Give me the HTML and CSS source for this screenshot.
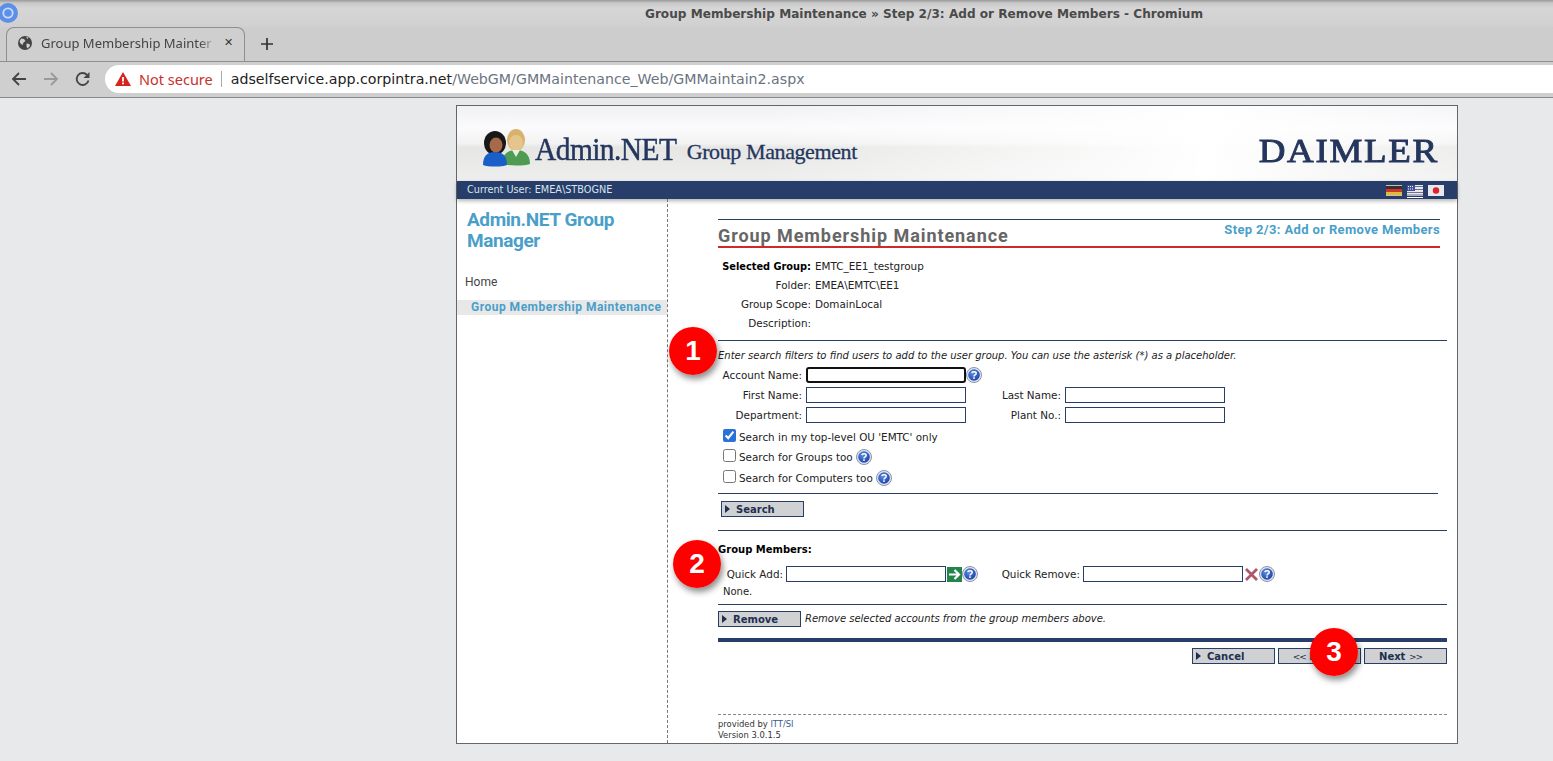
FILE: index.html
```html
<!DOCTYPE html>
<html lang="en">
<head>
    <meta charset="UTF-8">
    <title>Group Membership Maintenance</title>
    <link rel="stylesheet" href="styles.css">
</head>
<body>
<div class="browser">
    <div class="titlebar">
        <svg class="app-icon" width="20" height="20" viewBox="0 0 20 20">
            <circle cx="8" cy="10" r="10" fill="#5d8fe8"/>
            <circle cx="8" cy="10" r="5.6" fill="#cddbf6"/>
            <circle cx="8" cy="10" r="3.8" fill="#5a90ee"/>
        </svg>
        <span class="window-title">Group Membership Maintenance » Step 2/3: Add or Remove Members - Chromium</span>
    </div>
    <div class="tabstrip">
        <div class="tab">
            <svg class="globe" width="14" height="14" viewBox="0 0 14 14">
                <circle cx="7" cy="7" r="7" fill="#444"/>
                <path d="M3 2.500l3 .5 1.500 2-2 1.500-1 2.500-2-1.500-1-2zM8.500 7.500l3 .5 .5 2-2.500 2.500-1-2zM8 1l2.500 .5-1 1.500z" fill="#cfcfcf"/>
            </svg>
            <span class="tab-title">Group Membership Mainter</span>
            <span class="tab-close">✕</span>
        </div>
        <svg class="new-tab" width="12" height="12" viewBox="0 0 12 12">
            <path d="M6 0v12M0 6h12" stroke="#333" stroke-width="1.700"/>
        </svg>
    </div>
    <div class="toolbar">
        <svg class="nav" width="16" height="16" viewBox="0 0 16 16">
            <path d="M15 8H2M8 2L2 8l6 6" fill="none" stroke="#444" stroke-width="1.800"/>
        </svg>
        <svg class="nav" width="16" height="16" viewBox="0 0 16 16">
            <path d="M1 8h13M8 2l6 6-6 6" fill="none" stroke="#9a9a9a" stroke-width="1.800"/>
        </svg>
        <svg class="nav" width="16" height="16" viewBox="0 0 16 16">
            <path d="M13.500 9.500A6 6 0 1 1 12 3.800" fill="none" stroke="#444" stroke-width="1.800"/>
            <path d="M14.500 1v6h-6z" fill="#444"/>
        </svg>
        <div class="omnibox">
            <svg width="16" height="14" viewBox="0 0 16 14">
                <path d="M8 0l8 14H0z" fill="#d3261c"/>
                <path d="M7.100 5h1.800v4.500H7.100zM7.100 10.500h1.800v1.800H7.100z" fill="#fff"/>
            </svg>
            <span class="not-secure">Not secure</span>
            <span class="url"><b>adselfservice.app.corpintra.net</b>/WebGM/GMMaintenance_Web/GMMaintain2.aspx</span>
        </div>
    </div>

    <div class="viewport">
        <div class="frame">
            <div class="banner">
                <svg class="people" width="56" height="40" viewBox="0 0 56 40">
                    <ellipse cx="35" cy="12" rx="9" ry="11" fill="#d9b26a"/>
                    <ellipse cx="35" cy="15" rx="7" ry="8" fill="#e6c48e"/>
                    <path d="M21 36c0-10 6-14 14-14s14 4 14 14c-6 2-22 2-28 0z" fill="#4e9c52"/>
                    <path d="M31 22l4 7 4-7z" fill="#e8f0e0"/>
                    <ellipse cx="14" cy="15" rx="11" ry="12" fill="#181818"/>
                    <ellipse cx="15" cy="17" rx="6.500" ry="7.500" fill="#a8684a"/>
                    <path d="M2 37c0-9 4-13 12-13s12 4 12 13c-5 2-19 2-24 0z" fill="#1a5fc8"/>
                </svg>
                <span class="brand">Admin.NET</span>
                <span class="brand-sub">Group Management</span>
                <span class="daimler">DAIMLER</span>
            </div>
            <div class="userbar">
                <span class="current-user">Current User: EMEA\STBOGNE</span>
                <div class="flags">
                    <svg width="16" height="11" viewBox="0 0 16 11">
                        <rect width="16" height="11" fill="#c8c2a8"/>
                        <rect y="1" width="16" height="3" fill="#333"/>
                        <rect y="4" width="16" height="3" fill="#d0342a"/>
                        <rect y="7" width="16" height="3" fill="#e3b93c"/>
                    </svg>
                    <svg class="flag-us" width="16" height="13" viewBox="0 0 16 13">
                        <rect width="16" height="11" fill="#e9e9ef"/>
                        <path d="M0 1.500h16M0 4.500h16M0 7.500h16M0 10h16" stroke="#6f6f90"/>
                        <rect width="8" height="6" fill="#3f4f98"/>
                        <path d="M1 1.500h6M1 4h6" stroke="#fff" stroke-dasharray="1 1"/>
                        <rect y="12" width="16" height="1" fill="#fff"/>
                    </svg>
                    <svg width="16" height="11" viewBox="0 0 16 11">
                        <rect width="16" height="11" fill="#e8e8ec"/>
                        <circle cx="8" cy="5.500" r="3.200" fill="#e0202a"/>
                    </svg>
                </div>
            </div>
            <div class="columns">
                <div class="sidebar">
                    <div class="side-title">Admin.NET Group Manager</div>
                    <div class="side-home">Home</div>
                    <div class="side-current">Group Membership Maintenance</div>
                </div>
                <div class="content">
                    <div class="page-head">
                        <h1>Group Membership Maintenance</h1>
                        <span class="step">Step 2/3: Add or Remove Members</span>
                    </div>

                    <div class="info">
                        <label class="strong">Selected Group:</label><span>EMTC_EE1_testgroup</span>
                        <label>Folder:</label><span>EMEA\EMTC\EE1</span>
                        <label>Group Scope:</label><span>DomainLocal</span>
                        <label>Description:</label><span></span>
                    </div>

                    <div class="section search-section">
                        <p class="hint">Enter search filters to find users to add to the user group. You can use the asterisk (*) as a placeholder.</p>
                        <div class="filters">
                            <label>Account Name:</label>
                            <div class="field"><input class="text focused" type="text"><svg class="help" viewBox="0 0 16 16"><use href="#q"/></svg></div>
                            <span></span><span></span>
                            <label>First Name:</label>
                            <div class="field"><input class="text" type="text"></div>
                            <label>Last Name:</label>
                            <div class="field"><input class="text" type="text"></div>
                            <label>Department:</label>
                            <div class="field"><input class="text" type="text"></div>
                            <label>Plant No.:</label>
                            <div class="field"><input class="text" type="text"></div>
                        </div>
                        <div class="checks">
                            <div class="check"><input type="checkbox" checked><span>Search in my top-level OU 'EMTC' only</span></div>
                            <div class="check"><input type="checkbox"><span>Search for Groups too</span><svg class="help" viewBox="0 0 16 16"><use href="#q"/></svg></div>
                            <div class="check"><input type="checkbox"><span>Search for Computers too</span><svg class="help" viewBox="0 0 16 16"><use href="#q"/></svg></div>
                        </div>
                        <div class="search-bar">
                            <button class="btn arrow">Search</button>
                        </div>
                    </div>

                    <div class="section members">
                        <div class="members-title">Group Members:</div>
                        <div class="quick">
                            <label class="quick-add">Quick Add:</label>
                            <input class="text" type="text">
                            <svg class="go" width="15" height="15" viewBox="0 0 15 15">
                                <rect width="15" height="15" fill="#23854a"/>
                                <path d="M2 7.500h9M7.500 3l4.500 4.500L7.500 12" fill="none" stroke="#fff" stroke-width="2.200"/>
                            </svg>
                            <svg class="help" viewBox="0 0 16 16"><use href="#q"/></svg>
                            <label class="quick-remove">Quick Remove:</label>
                            <input class="text" type="text">
                            <svg class="go" width="15" height="15" viewBox="0 0 15 15">
                                <path d="M2 2l11 11M13 2L2 13" stroke="#b0566a" stroke-width="2.800"/>
                            </svg>
                            <svg class="help" viewBox="0 0 16 16"><use href="#q"/></svg>
                        </div>
                        <div class="none">None.</div>
                    </div>

                    <div class="section remove-row">
                        <button class="btn arrow">Remove</button>
                        <em>Remove selected accounts from the group members above.</em>
                    </div>

                    <div class="actions">
                        <button class="btn arrow">Cancel</button>
                        <button class="btn step-btn"><span class="thin">&lt;&lt;</span> Back</button>
                        <button class="btn step-btn">Next <span class="thin">&gt;&gt;</span></button>
                    </div>

                    <div class="footer">
                        <div>provided by <span class="itt">ITT/SI</span></div>
                        <div>Version 3.0.1.5</div>
                    </div>
                </div>
            </div>
            <div class="badge badge-1">1</div>
            <div class="badge badge-2">2</div>
            <div class="badge badge-3">3</div>
        </div>
    </div>
</div>
<svg width="0" height="0" class="defs">
    <defs>
        <radialGradient id="qfill" cx="40%" cy="35%" r="70%">
            <stop offset="0" stop-color="#5b8ee0"/>
            <stop offset="1" stop-color="#1a3fa8"/>
        </radialGradient>
        <g id="q">
            <circle cx="8" cy="8" r="7.500" fill="#dfe6f2" stroke="#8a93a8" stroke-width="1"/>
            <circle cx="8" cy="8" r="5.800" fill="url(#qfill)"/>
            <path d="M5.800 6.200C6 4.300 10.200 4.300 10.200 6.400 10.200 7.900 8 7.900 8 9.400" fill="none" stroke="#fff" stroke-width="1.500"/>
            <rect x="7.200" y="10.300" width="1.600" height="1.600" fill="#fff"/>
        </g>
    </defs>
</svg>
</body>
</html>
```

FILE: styles.css
```css
*{
    margin: 0;
    padding: 0;
    box-sizing: border-box;
}
html,body{
    height: 761px;
    overflow: hidden;
}
body{
    background: #e8e9eb;
    font-family: "DejaVu Sans", sans-serif;
}
.defs{
    display: block;
    height: 0;
}

/* browser chrome */
.titlebar{
    height: 27px;
    background: linear-gradient(#9a9a9a 0, #c8c8c8 3px, #d6d6d6 8px, #d0d0d0 100%);
    position: relative;
    text-align: center;
}
.app-icon{
    position: absolute;
    left: 0;
    top: 3px;
}
.window-title{
    display: block;
    padding-left: 295px;
    line-height: 29px;
    font-size: 12.100px;
    font-weight: bold;
    color: #4a4a4a;
}
.tabstrip{
    height: 34px;
    background: #cdcdcd;
    display: flex;
    align-items: flex-end;
    padding-left: 6px;
}
.tab{
    width: 239px;
    height: 34px;
    background: #cfcfcf;
    border: 1px solid #8f8f8f;
    border-bottom: 0;
    border-radius: 8px 8px 0 0;
    display: flex;
    align-items: center;
    padding: 0 0 4px 11px;
}
.globe{
    flex: none;
}
.tab-title{
    width: 176px;
    margin-left: 9px;
    font: 13px "Noto Sans", sans-serif;
    color: #444;
    white-space: nowrap;
    overflow: hidden;
    -webkit-mask-image: linear-gradient(90deg, #000 90%, transparent);
}
.tab-close{
    margin-left: 7px;
    font-size: 11px;
    color: #333;
}
.new-tab{
    margin: 0 0 11px 16px;
}
.toolbar{
    height: 37px;
    background: #cfcfcf;
    border-top: 1px solid #8f8f8f;
    border-bottom: 1px solid #8a8a8a;
    display: flex;
    align-items: center;
    padding: 0 0 1px 11px;
}
.nav{
    margin-right: 16px;
}
.omnibox{
    flex: 1;
    height: 28px;
    margin-left: -2px;
    background: #fff;
    border-radius: 14px 0 0 14px;
    display: flex;
    align-items: center;
    padding-left: 10px;
}
.not-secure{
    margin: -1px 0 0 8px;
    padding-right: 8px;
    border-right: 1px solid #aaa;
    font: 14.500px/16px "Noto Sans", sans-serif;
    color: #c9302a;
}
.url{
    margin-left: 9px;
    font-size: 14.200px;
    color: #6b7480;
}
.url b{
    font-weight: normal;
    color: #222;
}

/* page */
.viewport{
    padding: 7px 0 0 456px;
}
.frame{
    width: 1002px;
    height: 639px;
    background: #fff;
    border: 1px solid #666;
    position: relative;
    font-size: 10.400px;
    color: #222;
}
.banner{
    height: 75px;
    background-image: linear-gradient(90deg, rgba(240,240,240,0) 30%, #fff 75%, rgba(255,255,255,.3) 100%), linear-gradient(#f0f1f4, #fbfbfd 30%, #f2f2f2 50%, #e6e6e4 55%, #eeeeee 100%);
    display: flex;
    align-items: flex-start;
    padding: 24px 18px 0 24px;
    font-family: "Liberation Serif", serif;
    color: #24365e;
}
.people{
    flex: none;
    margin-top: -2px;
}
.brand{
    margin: 1px -2px 0 -2px;
    font-size: 32px;
    line-height: 36px;
    letter-spacing: -.6px;
    -webkit-text-stroke: .5px #24365e;
    transform: scaleX(.92);
    transform-origin: left center;
}
.brand-sub{
    margin-top: 9px;
    font-size: 22px;
    line-height: 26px;
    letter-spacing: -.4px;
    -webkit-text-stroke: .3px #24365e;
}
.daimler{
    margin: 3px 0 0 auto;
    font-size: 33px;
    line-height: 36px;
    letter-spacing: 1.500px;
    -webkit-text-stroke: .9px #24365e;
    transform: scaleX(1.120);
    transform-origin: right center;
}
.userbar{
    height: 18px;
    background: #263e69;
    color: #dbe5ee;
    display: flex;
    align-items: center;
    justify-content: space-between;
    padding: 0 13px 0 10px;
    box-shadow: 0 2px 4px rgba(0,0,0,.3);
    font-size: 9.700px;
}
.current-user{
    margin-bottom: 2px;
}
.flags{
    display: flex;
    gap: 5px;
    align-items: flex-start;
    margin-top: 3px;
}
.columns{
    display: flex;
    height: 544px;
}
.sidebar{
    width: 211px;
    border-right: 1px dashed #777;
    padding-top: 10px;
}
.side-title{
    padding: 0 40px 0 10px;
    font: bold 19px/21px Roboto, sans-serif;
    letter-spacing: -.4px;
    color: #4a9fc9;
}
.side-home{
    margin: 24px 0 0 8px;
    font: 12px/14px Roboto, sans-serif;
    color: #444;
}
.side-current{
    margin-top: 11px;
    height: 15px;
    padding-left: 14px;
    background: #e8e8e8;
    font: bold 12px/15px Roboto, sans-serif;
    letter-spacing: .5px;
    color: #4a9fc9;
    white-space: nowrap;
}
.content{
    flex: 1;
    padding: 20px 10px 0 50px;
}

.page-head{
    width: 722px;
    height: 29px;
    border-top: 1px solid #263e69;
    border-bottom: 2px solid #cf2a27;
    display: flex;
    justify-content: space-between;
}
h1{
    font: bold 18px/31px Roboto, sans-serif;
    letter-spacing: .93px;
    color: #666;
}
.step{
    font: bold 13px/19px Roboto, sans-serif;
    letter-spacing: .36px;
    color: #4a9fc9;
}
.info{
    display: grid;
    grid-template-columns: 93px auto;
    grid-auto-rows: 19px;
    align-content: start;
    column-gap: 4px;
    margin-top: 9px;
    line-height: 19px;
    height: 83px;
}
label{
    text-align: right;
    white-space: nowrap;
}
.strong{
    font-size: 9.800px;
    font-weight: bold;
    color: #000;
}
.section{
    border-top: 1px solid #263e69;
}
.search-section{
    height: 190px;
}
.hint{
    margin-top: 9px;
    font-size: 10px;
    font-style: italic;
    line-height: 12px;
}
.filters{
    display: grid;
    grid-template-columns: 84px 186px 65px auto;
    grid-auto-rows: 20px;
    column-gap: 4px;
    align-items: center;
    margin-top: 3px;
}
.field{
    display: flex;
    align-items: center;
    height: 20px;
}
.text{
    width: 160px;
    height: 16px;
    border: 1px solid #263e69;
    background: #fff;
    outline: none;
}
.focused{
    border: 2px solid #111;
    border-radius: 3px;
}
.help{
    width: 16px;
    height: 16px;
    flex: none;
}
.checks{
    margin: 2px 0 0 5px;
}
.check{
    display: flex;
    align-items: center;
    height: 20px;
}
.check:last-child{
    margin-top: 1px;
}
.check input{
    width: 13px;
    height: 13px;
    margin: 0 3px 3px 0;
    accent-color: #2a72d8;
}
.check .help{
    margin-left: 3px;
}
.search-bar{
    width: 720px;
    margin-top: 5px;
    padding: 7px 0 0 3px;
    border-top: 1px solid #263e69;
}
.btn{
    display: block;
    width: 83px;
    height: 16px;
    padding-top: 2px;
    border: 1px solid #263e69;
    background: #d0d1d3;
    font: bold 10px/12px "DejaVu Sans", sans-serif;
    color: #1e2f50;
    text-align: center;
    position: relative;
}
.step-btn{
    padding-right: 10px;
}
.thin{
    font-size: 9px;
    font-weight: normal;
    letter-spacing: -1px;
}
.arrow{
    text-align: left;
    padding-left: 14px;
}
.arrow::before{
    content: "";
    position: absolute;
    left: 3px;
    top: 3px;
    border-left: 5px solid #1e2f50;
    border-top: 4px solid transparent;
    border-bottom: 4px solid transparent;
}
.members{
    height: 74px;
}
.members-title{
    margin-top: 13px;
    font-size: 10px;
    font-weight: bold;
    line-height: 12px;
    color: #000;
}
.quick{
    display: flex;
    align-items: center;
    height: 20px;
    margin-top: 8px;
}
.quick-add{
    width: 65px;
    margin-right: 3px;
}
.quick-remove{
    width: 80px;
    margin: 0 3px 0 22px;
}
.go{
    flex: none;
    margin-left: 1px;
}
.none{
    margin: 2px 0 0 5px;
    font-size: 10px;
    line-height: 12px;
}
.remove-row{
    display: flex;
    height: 38px;
    padding-top: 6px;
    border-bottom: 4px solid #263e69;
}
.remove-row em{
    margin-left: 4px;
    font-size: 10px;
    line-height: 15px;
}
.actions{
    display: flex;
    justify-content: flex-end;
    gap: 3px;
    margin-top: 6px;
}
.footer{
    margin-top: 50px;
    padding-top: 4px;
    border-top: 1px dashed #888;
    font-size: 8.400px;
    line-height: 11px;
    color: #333;
}
.itt{
    color: #3a5a88;
}
.badge{
    position: absolute;
    width: 48px;
    height: 48px;
    border-radius: 50%;
    background: radial-gradient(circle at 50% 45%, #ff0000 70%, #e80000);
    box-shadow: 2px 4px 6px rgba(0,0,0,.45);
    color: #fff;
    font: bold 28px/48px "Liberation Sans", sans-serif;
    text-align: center;
}
.badge-1{
    left: 212px;
    top: 221px;
}
.badge-2{
    left: 216px;
    top: 434px;
}
.badge-3{
    left: 853px;
    top: 522px;
}
```
